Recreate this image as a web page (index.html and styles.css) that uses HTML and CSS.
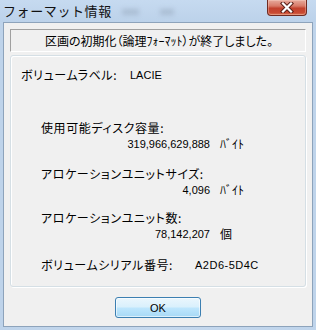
FILE: index.html
```html
<!DOCTYPE html>
<html lang="ja">
<head>
<meta charset="utf-8">
<link rel="stylesheet" href="styles.css">
</head>
<body>
<div class="window">
  <div class="titlebar">
    <span class="title">フォーマット情報</span>
    <span class="blur b1"></span>
    <span class="blur b2"></span>
    <span class="close">
      <svg width="14" height="11" viewBox="0 0 14 11">
        <path d="M3 1.5 L11 9.5 M11 1.5 L3 9.5" stroke="#5a2018" stroke-width="4.2" stroke-linecap="square" fill="none"/>
        <path d="M3 1.5 L11 9.5 M11 1.5 L3 9.5" stroke="#ffffff" stroke-width="2.2" stroke-linecap="square" fill="none"/>
      </svg>
    </span>
  </div>
  <div class="client">
    <div class="status">区画の初期化（論理ﾌｫｰﾏｯﾄ）が終了しました。</div>
    <div class="group">
      <div class="row">
        <span class="lab w1">ボリュームラベル:</span><span class="val">LACIE</span>
      </div>
      <div class="sec s2">
        <div class="lab">使用可能ディスク容量:</div>
        <div class="vrow"><span class="num">319,966,629,888</span><span class="unit">ﾊﾞｲﾄ</span></div>
      </div>
      <div class="sec s3">
        <div class="lab">アロケーションユニットサイズ:</div>
        <div class="vrow"><span class="num">4,096</span><span class="unit">ﾊﾞｲﾄ</span></div>
      </div>
      <div class="sec s4">
        <div class="lab">アロケーションユニット数:</div>
        <div class="vrow"><span class="num">78,142,207</span><span class="unit">個</span></div>
      </div>
      <div class="row sec s5">
        <span class="lab w5">ボリュームシリアル番号:</span><span class="val serial">A2D6-5D4C</span>
      </div>
    </div>
    <div class="btnrow"><button class="ok">OK</button></div>
  </div>
</div>
</body>
</html>
```

FILE: styles.css
```css
html, body {
  margin: 0;
  padding: 0;
}
body {
  width: 316px;
  height: 330px;
  overflow: hidden;
  font-family: "Noto Sans CJK JP", sans-serif;
  font-size: 12px;
  font-weight: 400;
  color: #000;
}
.window {
  width: 316px;
  height: 330px;
  display: flex;
  flex-direction: column;
  background: linear-gradient(90deg, #bed3ea, #c6d9ee 50%, #bfd4eb);
}
.titlebar {
  height: 22px;
  flex: none;
  display: flex;
  align-items: center;
  background: linear-gradient(#c6daf0, #bcd2ea);
}
.title {
  margin-left: 3px;
  font-size: 13px;
  letter-spacing: 0.6px;
  line-height: 16px;
  color: #111;
}
.blur {
  height: 6px;
  background: #9aadc2;
  filter: blur(2.5px);
  opacity: 0.6;
  margin-top: 2px;
}
.b1 {
  width: 17px;
  margin-left: 10px;
}
.b2 {
  width: 14px;
  margin-left: 21px;
}
.close {
  align-self: flex-start;
  margin-left: auto;
  margin-right: 9px;
  width: 38px;
  height: 15px;
  border: 1px solid #6f2b22;
  border-top: none;
  border-radius: 0 0 4px 4px;
  background: linear-gradient(#e6aa9c, #d87a68 40%, #c2412d 55%, #c94a33 85%, #d97856);
  box-shadow: inset 0 0 0 1px rgba(255, 220, 210, 0.35);
  display: flex;
  align-items: center;
  justify-content: center;
}
.close svg {
  display: block;
}
.client {
  flex: 1;
  margin: 0 3px 3px 3px;
  border: 1px solid #8da3bb;
  background: #f0f0f0;
  display: flex;
  flex-direction: column;
}
.status {
  margin: 6px 6px 0 6px;
  height: 21px;
  line-height: 21px;
  border-top: 1px solid #a0a0a0;
  border-left: 1px solid #a0a0a0;
  border-right: 1px solid #ffffff;
  border-bottom: 1px solid #ffffff;
  text-align: center;
  font-feature-settings: "palt";
  padding-left: 2px;
}
.group {
  margin: 3px 6px 0 6px;
  border: 1px solid #d5dfe5;
  border-radius: 3px;
  box-shadow: inset 1px 1px 0 #ffffff, 1px 1px 0 #ffffff;
  padding: 11px 0 13px 10px;
}
.row {
  display: flex;
  line-height: 16px;
}
.lab {
  line-height: 16px;
  font-feature-settings: "palt";
  letter-spacing: 0.6px;
  white-space: nowrap;
}
.w1 {
  width: 109px;
}
.w5 {
  width: 154px;
}
.val, .num {
  font-family: "Liberation Sans", "Noto Sans CJK JP", sans-serif;
  font-size: 11px;
}
.serial {
  letter-spacing: 0.5px;
}
.sec {
  margin-left: 20px;
}
.s2 {
  margin-top: 37px;
}
.s3 {
  margin-top: 14px;
}
.s4 {
  margin-top: 12px;
}
.s5 {
  margin-top: 15px;
}
.vrow {
  display: flex;
  line-height: 16px;
}
.num {
  width: 169px;
  text-align: right;
}
.unit {
  margin-left: 10px;
}
.btnrow {
  display: flex;
  justify-content: center;
  margin-top: 10px;
}
.ok {
  width: 86px;
  height: 21px;
  margin: 0;
  padding: 0;
  border: 1px solid #3c7fb1;
  border-radius: 3px;
  background: linear-gradient(#eaf6fd, #d9f0fc 48%, #bee6fd 52%, #a7d9f5);
  box-shadow: inset 0 0 0 1px rgba(255, 255, 255, 0.6);
  font-family: "Liberation Sans", sans-serif;
  font-size: 11px;
  color: #000;
}
```
